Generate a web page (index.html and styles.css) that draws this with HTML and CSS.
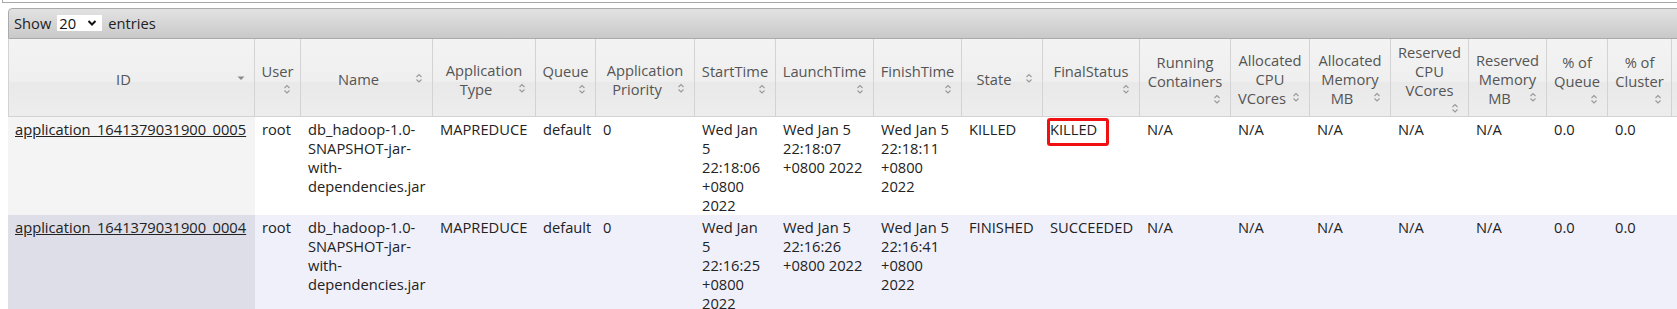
FILE: index.html
```
<!DOCTYPE html>
<html>
<head>
<meta charset="utf-8">
<title>Applications</title>
<link rel="stylesheet" href="styles.css">
</head>
<body>
<div class="prev"></div>
<div class="page">
  <div class="dt-wrapper">
    <div class="toolbar">
      <span class="lbl">Show</span>
      <span class="select"><span class="sel-val">20</span><svg class="chev" width="10" height="8" viewBox="0 0 10 8"><path d="M1.5 2 L5 5.5 L8.5 2" fill="none" stroke="#111" stroke-width="2"/></svg></span>
      <span class="lbl">entries</span>
    </div>
    <table class="apps">
      <thead>
        <tr>
          <th class="w-id">ID<span class="ico"><svg width="16" height="16" viewBox="0 0 16 16"><path d="M4.5 6.5 L11.5 6.5 L8 10 Z" fill="#8a8a8a"/></svg></span></th>
          <th class="w-user">User<span class="ico below"><svg width="16" height="16" viewBox="0 0 16 16"><path d="M5.5 7 L8 4.5 L10.5 7 M5.5 9.5 L8 12 L10.5 9.5" fill="none" stroke="#999" stroke-width="1.1"/></svg></span></th>
          <th class="w-name">Name<span class="ico"><svg width="16" height="16" viewBox="0 0 16 16"><path d="M5.5 7 L8 4.5 L10.5 7 M5.5 9.5 L8 12 L10.5 9.5" fill="none" stroke="#999" stroke-width="1.1"/></svg></span></th>
          <th class="w-type">Application Type<span class="ico"><svg width="16" height="16" viewBox="0 0 16 16"><path d="M5.5 7 L8 4.5 L10.5 7 M5.5 9.5 L8 12 L10.5 9.5" fill="none" stroke="#999" stroke-width="1.1"/></svg></span></th>
          <th class="w-queue">Queue<span class="ico below"><svg width="16" height="16" viewBox="0 0 16 16"><path d="M5.5 7 L8 4.5 L10.5 7 M5.5 9.5 L8 12 L10.5 9.5" fill="none" stroke="#999" stroke-width="1.1"/></svg></span></th>
          <th class="w-prio">Application Priority<span class="ico"><svg width="16" height="16" viewBox="0 0 16 16"><path d="M5.5 7 L8 4.5 L10.5 7 M5.5 9.5 L8 12 L10.5 9.5" fill="none" stroke="#999" stroke-width="1.1"/></svg></span></th>
          <th class="w-start">StartTime<span class="ico below"><svg width="16" height="16" viewBox="0 0 16 16"><path d="M5.5 7 L8 4.5 L10.5 7 M5.5 9.5 L8 12 L10.5 9.5" fill="none" stroke="#999" stroke-width="1.1"/></svg></span></th>
          <th class="w-launch">LaunchTime<span class="ico below"><svg width="16" height="16" viewBox="0 0 16 16"><path d="M5.5 7 L8 4.5 L10.5 7 M5.5 9.5 L8 12 L10.5 9.5" fill="none" stroke="#999" stroke-width="1.1"/></svg></span></th>
          <th class="w-finish">FinishTime<span class="ico below"><svg width="16" height="16" viewBox="0 0 16 16"><path d="M5.5 7 L8 4.5 L10.5 7 M5.5 9.5 L8 12 L10.5 9.5" fill="none" stroke="#999" stroke-width="1.1"/></svg></span></th>
          <th class="w-state">State<span class="ico"><svg width="16" height="16" viewBox="0 0 16 16"><path d="M5.5 7 L8 4.5 L10.5 7 M5.5 9.5 L8 12 L10.5 9.5" fill="none" stroke="#999" stroke-width="1.1"/></svg></span></th>
          <th class="w-final">FinalStatus<span class="ico below"><svg width="16" height="16" viewBox="0 0 16 16"><path d="M5.5 7 L8 4.5 L10.5 7 M5.5 9.5 L8 12 L10.5 9.5" fill="none" stroke="#999" stroke-width="1.1"/></svg></span></th>
          <th class="w-run">Running Containers<span class="ico below"><svg width="16" height="16" viewBox="0 0 16 16"><path d="M5.5 7 L8 4.5 L10.5 7 M5.5 9.5 L8 12 L10.5 9.5" fill="none" stroke="#999" stroke-width="1.1"/></svg></span></th>
          <th class="w-acpu">Allocated CPU VCores<span class="ico"><svg width="16" height="16" viewBox="0 0 16 16"><path d="M5.5 7 L8 4.5 L10.5 7 M5.5 9.5 L8 12 L10.5 9.5" fill="none" stroke="#999" stroke-width="1.1"/></svg></span></th>
          <th class="w-amem">Allocated Memory MB<span class="ico"><svg width="16" height="16" viewBox="0 0 16 16"><path d="M5.5 7 L8 4.5 L10.5 7 M5.5 9.5 L8 12 L10.5 9.5" fill="none" stroke="#999" stroke-width="1.1"/></svg></span></th>
          <th class="w-rcpu">Reserved CPU VCores<span class="ico below"><svg width="16" height="16" viewBox="0 0 16 16"><path d="M5.5 7 L8 4.5 L10.5 7 M5.5 9.5 L8 12 L10.5 9.5" fill="none" stroke="#999" stroke-width="1.1"/></svg></span></th>
          <th class="w-rmem">Reserved Memory MB<span class="ico"><svg width="16" height="16" viewBox="0 0 16 16"><path d="M5.5 7 L8 4.5 L10.5 7 M5.5 9.5 L8 12 L10.5 9.5" fill="none" stroke="#999" stroke-width="1.1"/></svg></span></th>
          <th class="w-pq">% of Queue<span class="ico below"><svg width="16" height="16" viewBox="0 0 16 16"><path d="M5.5 7 L8 4.5 L10.5 7 M5.5 9.5 L8 12 L10.5 9.5" fill="none" stroke="#999" stroke-width="1.1"/></svg></span></th>
          <th class="w-pc">% of Cluster<span class="ico below"><svg width="16" height="16" viewBox="0 0 16 16"><path d="M5.5 7 L8 4.5 L10.5 7 M5.5 9.5 L8 12 L10.5 9.5" fill="none" stroke="#999" stroke-width="1.1"/></svg></span></th>
          <th class="w-more"></th>
        </tr>
      </thead>
      <tbody>
        <tr class="r-even">
          <td class="sorted"><a href="#">application_1641379031900_0005</a></td>
          <td>root</td>
          <td>db_hadoop-1.0-SNAPSHOT-jar-with-dependencies.jar</td>
          <td>MAPREDUCE</td>
          <td>default</td>
          <td>0</td>
          <td>Wed Jan 5 22:18:06 +0800 2022</td>
          <td>Wed Jan 5 22:18:07 +0800 2022</td>
          <td>Wed Jan 5 22:18:11 +0800 2022</td>
          <td>KILLED</td>
          <td><span class="marked">KILLED</span></td>
          <td>N/A</td>
          <td>N/A</td>
          <td>N/A</td>
          <td>N/A</td>
          <td>N/A</td>
          <td>0.0</td>
          <td>0.0</td>
          <td></td>
        </tr>
        <tr class="r-odd">
          <td class="sorted"><a href="#">application_1641379031900_0004</a></td>
          <td>root</td>
          <td>db_hadoop-1.0-SNAPSHOT-jar-with-dependencies.jar</td>
          <td>MAPREDUCE</td>
          <td>default</td>
          <td>0</td>
          <td>Wed Jan 5 22:16:25 +0800 2022</td>
          <td>Wed Jan 5 22:16:26 +0800 2022</td>
          <td>Wed Jan 5 22:16:41 +0800 2022</td>
          <td>FINISHED</td>
          <td>SUCCEEDED</td>
          <td>N/A</td>
          <td>N/A</td>
          <td>N/A</td>
          <td>N/A</td>
          <td>N/A</td>
          <td>0.0</td>
          <td>0.0</td>
          <td></td>
        </tr>
      </tbody>
    </table>
  </div>
</div>
</body>
</html>
```
FILE: styles.css
```
html, body {
  margin: 0;
  padding: 0;
  background: #ffffff;
  overflow: hidden;
}
body {
  font-family: "Open Sans", "Noto Sans", "DejaVu Sans", sans-serif;
  font-size: 14.7px;
  line-height: 19px;
  color: #222222;
}
.prev {
  margin-left: 2px;
  height: 2px;
  border-left: 1px solid #a8a8a8;
  border-bottom: 1px solid #a8a8a8;
}
.page {
  margin-top: 5px;
  padding-left: 8px;
  overflow: hidden;
}
.dt-wrapper {
  width: 1780px;
}
.toolbar {
  box-sizing: border-box;
  height: 31px;
  display: flex;
  align-items: center;
  gap: 6px;
  padding: 0 4px 1px 5px;
  border: 1px solid #aaaaaa;
  border-top-left-radius: 4px;
  background: linear-gradient(to bottom, #e2e2e2 0%, #d6d6d6 50%, #c9c9c9 100%);
  color: #222222;
}
.select {
  display: inline-flex;
  align-items: center;
  justify-content: space-between;
  box-sizing: border-box;
  width: 45px;
  height: 16px;
  padding: 0 5px 0 2px;
  background: #ffffff;
  color: #111111;
  line-height: 16px;
}
.apps {
  table-layout: fixed;
  border-collapse: separate;
  border-spacing: 0;
  width: 1764px;
}
.apps th {
  box-sizing: border-box;
  padding: 4px 5px 0 5px;
  font-weight: normal;
  color: #555555;
  text-align: center;
  vertical-align: middle;
  border-right: 1px solid #d3d3d3;
  border-bottom: 1px solid #d3d3d3;
  background: linear-gradient(to bottom, #f3f3f3 0%, #efefef 55%, #e9e9e9 56%, #ededed 100%);
}
.apps th:first-child {
  border-left: 1px solid #d3d3d3;
}
.ico {
  float: right;
  width: 16px;
  height: 16px;
}
.ico svg {
  display: block;
}
.ico.below {
  float: none;
  display: block;
  margin-left: auto;
}
.apps td {
  box-sizing: border-box;
  padding: 3px 7px 0 7px;
  vertical-align: top;
  text-align: left;
}
.apps a {
  color: #222222;
  text-decoration: underline;
}
.r-even td { background: #ffffff; }
.r-even td.sorted { background: #f4f4f4; }
.r-odd td { background: #f0f0fb; }
.r-odd td.sorted { background: #dedee8; }
.marked {
  position: relative;
}
.marked::after {
  content: "";
  position: absolute;
  left: -3px;
  top: -1px;
  width: 62px;
  height: 28px;
  box-sizing: border-box;
  border: 3px solid #f01010;
  border-radius: 3px;
}
.w-id { width: 247px; }
.w-user { width: 46px; }
.w-name { width: 132px; }
.w-type { width: 103px; }
.w-queue { width: 60px; }
.w-prio { width: 99px; }
.w-start { width: 81px; }
.w-launch { width: 98px; }
.w-finish { width: 88px; }
.w-state { width: 81px; }
.w-final { width: 97px; }
.w-run { width: 91px; }
.w-acpu { width: 79px; }
.w-amem { width: 81px; }
.w-rcpu { width: 78px; }
.w-rmem { width: 78px; }
.w-pq { width: 61px; }
.w-pc { width: 64px; }
.w-more { width: 100px; }
```
